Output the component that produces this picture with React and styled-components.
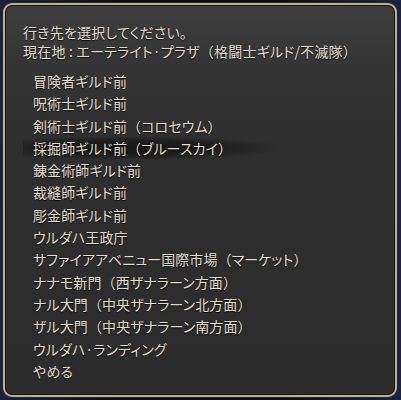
import React from 'react'
import styled, { createGlobalStyle } from 'styled-components'

const Global = createGlobalStyle`
  html, body {
    margin: 0;
    padding: 0;
    background: #10131f;
  }
  body {
    width: 401px;
    height: 400px;
    overflow: hidden;
  }
`

const Frame = styled.div`
  box-sizing: border-box;
  width: 401px;
  height: 400px;
  padding: 3px 4px 3px 3px;
  background: linear-gradient(90deg, #1b2340 0%, #0c0d12 30%, #0c0d12 70%, #1c2444 100%);
`

const Panel = styled.div`
  box-sizing: border-box;
  height: 100%;
  border: 2px solid #b9b195;
  border-radius: 9px;
  box-shadow: inset 0 0 0 1px #16150f, 0 0 0 1px #2a2820;
  background: linear-gradient(180deg, #3e3e3e 0px, #363636 50px, #2e2e2e 140px, #2c2c2c 100%);
  padding: 18px 0 0 18px;
  font-family: "Noto Sans CJK JP", "Noto Sans", sans-serif;
  font-feature-settings: "palt";
  color: #e0dcd0;
  text-shadow: 0 1px 1px rgba(0, 0, 0, 0.7);
`

const Header = styled.div`
  font-size: 14px;
  line-height: 19px;
  letter-spacing: 0.2px;
`

const List = styled.ul`
  list-style: none;
  margin: 9px 0 0 0;
  padding: 0;
`

const Item = styled.li`
  height: 22.3px;
  line-height: 22.3px;
  font-size: 14px;
  letter-spacing: 0.1px;
  padding-left: 10px;
  white-space: nowrap;
  width: 250px;
  background: ${p => p.$active
    ? 'radial-gradient(ellipse 60% 55% at 40% 50%, rgba(0,0,0,0.55) 0%, rgba(0,0,0,0.35) 60%, rgba(0,0,0,0) 100%)'
    : 'transparent'};
`

const Paren = styled.span`
  font-feature-settings: normal;
`

const Label = ({ text }) => (
  <>
    {text.split(/([（）])/).map((part, i) =>
      part === '（' || part === '）' ? <Paren key={i}>{part}</Paren> : part
    )}
  </>
)

const destinations = [
  '冒険者ギルド前',
  '呪術士ギルド前',
  '剣術士ギルド前（コロセウム）',
  '採掘師ギルド前（ブルースカイ）',
  '錬金術師ギルド前',
  '裁縫師ギルド前',
  '彫金師ギルド前',
  'ウルダハ王政庁',
  'サファイアアベニュー国際市場（マーケット）',
  'ナナモ新門（西ザナラーン方面）',
  'ナル大門（中央ザナラーン北方面）',
  'ザル大門（中央ザナラーン南方面）',
  'ウルダハ·ランディング',
  'やめる',
]

const App = () => {
  return (
    <Frame>
      <Global />
      <Panel>
        <Header>
          <div>行き先を選択してください。</div>
          <div><Label text="現在地 : エーテライト·プラザ（格闘士ギルド/不滅隊）" /></div>
        </Header>
        <List>
          {destinations.map((d, i) => (
            <Item key={d} $active={i === 3}><Label text={d} /></Item>
          ))}
        </List>
      </Panel>
    </Frame>
  )
}

export default App
